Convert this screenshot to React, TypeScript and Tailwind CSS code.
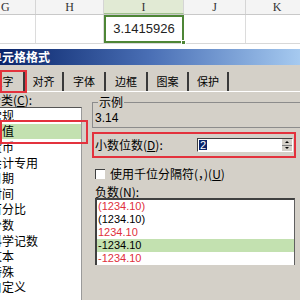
import React from "react";

const categories = ["常规", "数值", "货币", "会计专用", "日期", "时间", "百分比", "分数", "科学记数", "文本", "特殊", "自定义"];

const negatives = [
  { t: "(1234.10)", red: true, sel: false },
  { t: "(1234.10)", red: false, sel: false },
  { t: "1234.10", red: true, sel: false },
  { t: "-1234.10", red: false, sel: true },
  { t: "-1234.10", red: true, sel: false },
];

const tabs = [
  { label: "数字", cls: "w-[43px] -ml-[18px]" },
  { label: "对齐", cls: "w-[39px]" },
  { label: "字体", cls: "w-[42px]" },
  { label: "边框", cls: "w-[42px]" },
  { label: "图案", cls: "w-[41px]" },
  { label: "保护", cls: "w-[40px]" },
];

export default function App() {
  return (
    <div className="w-[300px] h-[300px] overflow-hidden bg-white flex flex-col font-['Noto_Sans_CJK_SC',sans-serif] text-black">
      {/* spreadsheet */}
      <div className="h-[49px] shrink-0 bg-white">
        <div className="flex h-[15px] bg-[#f4f4f4] border-b border-[#c9c9c9] font-['Liberation_Serif',serif] text-[12px] text-[#333] leading-none">
          <div className="w-[36px] shrink-0 border-r border-[#d5d5d5] flex items-center pl-[1px]">G</div>
          <div className="w-[68px] shrink-0 border-r border-[#d5d5d5] flex items-center justify-center">H</div>
          <div className="w-[80px] shrink-0 border-r border-[#d5d5d5] border-b border-b-[#9fc28c] bg-[#e1ead4] flex items-center justify-center">I</div>
          <div className="w-[62px] shrink-0 border-r border-[#d5d5d5] flex items-center justify-center">J</div>
          <div className="w-[62px] shrink-0 flex items-center justify-center">K</div>
        </div>
        <div className="flex h-[29px] border-b border-[#d8d8d8]">
          <div className="w-[36px] shrink-0 border-r border-[#dcdcdc]" />
          <div className="w-[68px] shrink-0 border-r border-[#dcdcdc]" />
          <div className="w-[80px] shrink-0 relative border-2 border-[#4e8636] flex items-center justify-center font-['Liberation_Sans',sans-serif] text-[13px] text-[#222]">
            3.1415926
            <div className="absolute -right-[4px] -bottom-[4px] w-[5px] h-[5px] bg-[#4e8636] border border-white" />
          </div>
          <div className="w-[62px] shrink-0 border-r border-[#dcdcdc]" />
          <div className="w-[62px] shrink-0" />
        </div>
      </div>

      {/* title bar */}
      <div className="h-[16px] shrink-0 bg-gradient-to-r from-[#0a246a] via-[#4a6fb5] to-[#a6caf0] flex items-center overflow-hidden">
        <span className="-ml-[10px] text-white font-bold text-[12px] leading-none whitespace-nowrap">单元格格式</span>
      </div>

      {/* dialog body */}
      <div className="flex-1 min-h-0 bg-[#d4d0c8] flex flex-col text-[12px]">
        {/* tabs */}
        <div className="h-[27px] shrink-0 pt-[7px] flex items-end border-b border-white relative">
          {tabs.map((t) => (
            <div
              key={t.label}
              className={`${t.cls} shrink-0 h-[19px] flex items-center justify-center border-r-2 border-[#3a3a3a] text-[11px] leading-none`}
            >
              {t.label}
            </div>
          ))}
          <div className="absolute left-0 top-[5px] w-[27px] h-[23px] border-2 border-[#e3323d]" />
        </div>

        {/* content */}
        <div className="flex flex-1 min-h-0">
          {/* left column */}
          <div className="w-[92px] shrink-0 flex flex-col">
            <div className="h-[15px] shrink-0 flex items-center -ml-[11px] whitespace-nowrap leading-none">
              分类(<span className="underline">C</span>):
            </div>
            <div className="relative w-[82px] flex-1 bg-white border-t border-[#555] border-r border-r-[#9a9a9a]">
              {categories.map((c) => (
                <div
                  key={c}
                  className={`h-[15.6px] flex items-center whitespace-nowrap leading-none ${c === "数值" ? "bg-[#c3e1b0]" : ""}`}
                >
                  <span className="-ml-[10px]">{c}</span>
                </div>
              ))}
              <div className="absolute left-0 top-[12px] w-[88px] h-[24px] border-2 border-[#e3323d]" />
            </div>
          </div>

          {/* right column */}
          <div className="flex-1 flex flex-col min-w-0">
            <fieldset className="mt-[3px] w-[230px] border border-[#8c8c8c] px-[2px] pb-[2px]">
              <legend className="ml-[3px] px-[1px] text-[12px] leading-[14px]">示例</legend>
              <div className="mt-[2px] h-[14px] leading-[14px] font-['Liberation_Sans',sans-serif] text-[12px]">3.14</div>
            </fieldset>

            <div className="mt-[4px] h-[26px] w-[204px] border-2 border-[#e3323d] flex items-center">
              <span className="pl-[1px] whitespace-nowrap leading-none">
                小数位数(<span className="underline">D</span>):
              </span>
              <div className="ml-auto mr-[1px] w-[96px] h-[14px] bg-white border-t border-l border-[#404040] border-b border-r border-b-white border-r-white flex items-center">
                <span className="ml-[1px] h-[10px] px-[1px] bg-[#0a246a] text-white font-['Liberation_Sans',sans-serif] text-[11px] leading-[10px]">2</span>
                <div className="ml-auto w-[10px] h-full flex flex-col">
                  <div className="flex-1 bg-[#d4d0c8] border-b border-[#808080] flex items-center justify-center">
                    <div className="w-0 h-0 border-l-[2px] border-r-[2px] border-b-[2px] border-l-transparent border-r-transparent border-b-black" />
                  </div>
                  <div className="flex-1 bg-[#d4d0c8] flex items-center justify-center">
                    <div className="w-0 h-0 border-l-[2px] border-r-[2px] border-t-[2px] border-l-transparent border-r-transparent border-t-black" />
                  </div>
                </div>
              </div>
            </div>

            <div className="mt-[9px] h-[14px] flex items-center pl-[3px] gap-[5px] whitespace-nowrap leading-none">
              <div className="w-[10px] h-[10px] bg-white border-t border-l border-[#404040] shrink-0" />
              <span>
                使用千位分隔符(，)(<span className="underline">U</span>)
              </span>
            </div>

            <div className="mt-[5px] h-[12px] pl-[3px] flex items-center whitespace-nowrap leading-none">
              负数(<span className="underline">N</span>):
            </div>

            <div className="ml-[3px] w-[200px] h-[67px] bg-white border-t-2 border-l-2 border-[#404040] border-r border-r-[#606060]">
              {negatives.map((n, i) => (
                <div
                  key={i}
                  className={`h-[13px] flex items-center pl-[1px] font-['Liberation_Sans',sans-serif] text-[11px] leading-none ${n.red ? "text-[#e0303c]" : "text-black"} ${n.sel ? "bg-[#c3e1b0]" : ""}`}
                >
                  {n.t}
                </div>
              ))}
            </div>
          </div>
        </div>
      </div>
    </div>
  );
}
